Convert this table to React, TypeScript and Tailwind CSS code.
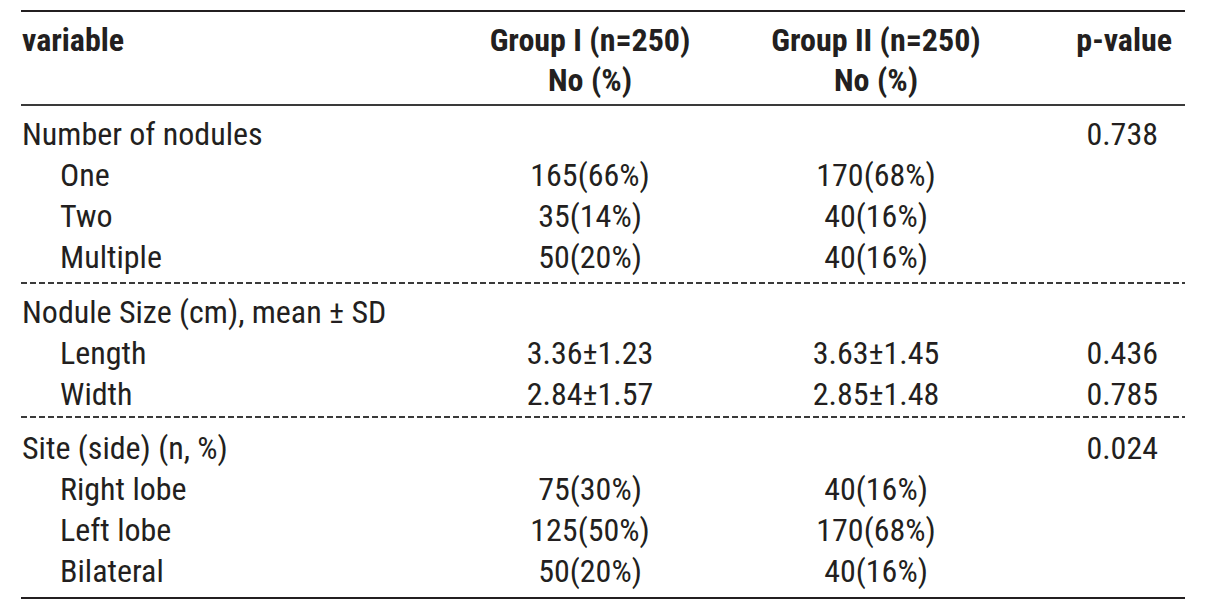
type Row = { label: string; sub?: boolean; g1?: string; g2?: string; p?: string };

const groups: Row[][] = [
  [
    { label: "Number of nodules", p: "0.738" },
    { label: "One", sub: true, g1: "165(66%)", g2: "170(68%)" },
    { label: "Two", sub: true, g1: "35(14%)", g2: "40(16%)" },
    { label: "Multiple", sub: true, g1: "50(20%)", g2: "40(16%)" },
  ],
  [
    { label: "Nodule Size (cm), mean ± SD" },
    { label: "Length", sub: true, g1: "3.36±1.23", g2: "3.63±1.45", p: "0.436" },
    { label: "Width", sub: true, g1: "2.84±1.57", g2: "2.85±1.48", p: "0.785" },
  ],
  [
    { label: "Site (side) (n, %)", p: "0.024" },
    { label: "Right lobe", sub: true, g1: "75(30%)", g2: "40(16%)" },
    { label: "Left lobe", sub: true, g1: "125(50%)", g2: "170(68%)" },
    { label: "Bilateral", sub: true, g1: "50(20%)", g2: "40(16%)" },
  ],
];

const groupPad = ["pt-[8px] pb-[4px]", "pt-[8px] pb-[1px]", "pt-[10px] pb-[5px]"];

function DataRow({ r }: { r: Row }) {
  return (
    <div className="grid grid-cols-[429px_280px_292px_172px] h-[41px] leading-[41px]">
      <div className={r.sub ? "pl-[39px]" : "pl-[1px]"}>{r.label}</div>
      <div className="text-center">{r.g1}</div>
      <div className="text-center">{r.g2}</div>
      <div className="text-right pr-[36px]">{r.p}</div>
    </div>
  );
}

function Dashed() {
  return (
    <div className="h-[2px] bg-[repeating-linear-gradient(to_right,#3a3a3a_0px,#3a3a3a_6px,transparent_6px,transparent_9px)]" />
  );
}

export default function App() {
  return (
    <div className="w-[1206px] h-[608px] bg-white px-[21px] pt-[10px] font-['Roboto_Condensed',sans-serif] text-[32px] text-[#231f20]">
      <div className="border-t-2 border-[#231f20]">
        <div className="grid grid-cols-[429px_280px_292px_172px] pt-[8px] pb-[4px] font-bold leading-[40px] border-b-2 border-[#3a3a3a]">
          <div className="pl-[1px]">variable</div>
          <div className="text-center">
            <div>Group I (n=250)</div>
            <div>No (%)</div>
          </div>
          <div className="text-center">
            <div>Group II (n=250)</div>
            <div>No (%)</div>
          </div>
          <div className="text-right pr-[22px]">p-value</div>
        </div>
        {groups.map((g, gi) => (
          <div key={gi}>
            <div className={groupPad[gi]}>
              {g.map((r, ri) => (
                <DataRow key={ri} r={r} />
              ))}
            </div>
            {gi < groups.length - 1 ? <Dashed /> : <div className="h-[2px] bg-[#231f20]" />}
          </div>
        ))}
      </div>
    </div>
  );
}
